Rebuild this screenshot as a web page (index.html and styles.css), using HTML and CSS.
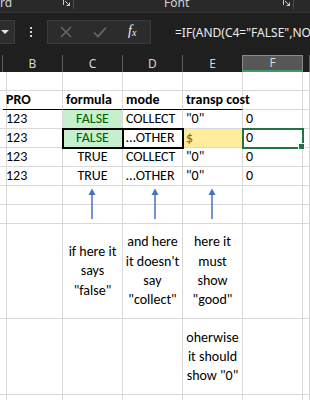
FILE: index.html
```html
<!DOCTYPE html>
<html>
<head>
  <meta charset="UTF-8">
  <link rel="stylesheet" href="styles.css">
</head>
<body>
  <!-- ribbon bottom edge -->
  <div class="ribbon">
    <span class="rb-label rb-clip">rd</span>
    <svg class="launcher" width="8" height="8" viewBox="0 0 8 8"><path d="M0.5 6V0.5H6M2 2L6.5 6.5M6.5 3.5V6.5H3.5" fill="none" stroke="#cfcfcf" stroke-width="1"/></svg>
    <span class="rb-sep"></span>
    <span class="rb-label rb-font">Font</span>
    <svg class="launcher" width="8" height="8" viewBox="0 0 8 8"><path d="M0.5 6V0.5H6M2 2L6.5 6.5M6.5 3.5V6.5H3.5" fill="none" stroke="#cfcfcf" stroke-width="1"/></svg>
    <span class="rb-sep"></span>
  </div>

  <!-- formula bar -->
  <div class="fbar">
    <div class="namebox"><span class="caret"></span></div>
    <div class="grip"><i></i><i></i><i></i></div>
    <div class="fbtns">
      <svg width="12" height="12" viewBox="0 0 12 12"><path d="M1 1L11 11M11 1L1 11" stroke="#6b6b6b" stroke-width="1.4"/></svg>
      <svg width="14" height="12" viewBox="0 0 14 12"><path d="M1 6.5L5 10.5L13 1.5" fill="none" stroke="#6b6b6b" stroke-width="1.6"/></svg>
      <span class="fx">f<sub>x</sub></span>
    </div>
    <div class="finput">=IF(AND(C4="FALSE",NOT(D4="COLLECT")),"good","0")</div>
  </div>

  <!-- column headers -->
  <div class="colheads">
    <div class="ch"></div>
    <div class="ch">B</div>
    <div class="ch">C</div>
    <div class="ch">D</div>
    <div class="ch">E</div>
    <div class="ch ch-sel">F</div>
    <div class="ch"></div>
  </div>

  <!-- cells -->
  <div class="sheet">
    <!-- row 1 -->
    <div class="c"></div><div class="c"></div><div class="c"></div><div class="c"></div><div class="c"></div><div class="c"></div><div class="c"></div>
    <!-- row 2 -->
    <div class="c"></div>
    <div class="c b hd">PRO</div>
    <div class="c b hd">formula</div>
    <div class="c b hd">mode</div>
    <div class="c b hd over">transp cost</div>
    <div class="c"></div><div class="c"></div>
    <!-- row 3 -->
    <div class="c"></div>
    <div class="c">123</div>
    <div class="c ctr good">FALSE</div>
    <div class="c">COLLECT</div>
    <div class="c">"0"</div>
    <div class="c">0</div>
    <div class="c"></div>
    <!-- row 4 -->
    <div class="c"></div>
    <div class="c">123</div>
    <div class="c ctr good boxed">FALSE</div>
    <div class="c boxed">…OTHER</div>
    <div class="c neutral">$</div>
    <div class="c active">0<span class="handle"></span></div>
    <div class="c"></div>
    <!-- row 5 -->
    <div class="c"></div>
    <div class="c">123</div>
    <div class="c ctr">TRUE</div>
    <div class="c">COLLECT</div>
    <div class="c">"0"</div>
    <div class="c">0</div>
    <div class="c"></div>
    <!-- row 6 -->
    <div class="c"></div>
    <div class="c">123</div>
    <div class="c ctr">TRUE</div>
    <div class="c">…OTHER</div>
    <div class="c">"0"</div>
    <div class="c">0</div>
    <div class="c"></div>
    <!-- row 7: arrows -->
    <div class="c"></div>
    <div class="c"></div>
    <div class="c arrow-cell"><svg class="arrow" width="10" height="32" viewBox="0 0 10 32"><path d="M5 6V31" stroke="#4472c4" stroke-width="1.5"/><path d="M1.5 7L5 0.5L8.5 7Z" fill="#4472c4"/></svg></div>
    <div class="c arrow-cell"><svg class="arrow arrow-d" width="10" height="32" viewBox="0 0 10 32"><path d="M5 6V31" stroke="#4472c4" stroke-width="1.5"/><path d="M1.5 7L5 0.5L8.5 7Z" fill="#4472c4"/></svg></div>
    <div class="c arrow-cell"><svg class="arrow arrow-e" width="10" height="32" viewBox="0 0 10 32"><path d="M5 6V31" stroke="#4472c4" stroke-width="1.5"/><path d="M1.5 7L5 0.5L8.5 7Z" fill="#4472c4"/></svg></div>
    <div class="c"></div><div class="c"></div>
    <!-- row 8 -->
    <div class="c"></div><div class="c"></div><div class="c"></div><div class="c"></div><div class="c"></div><div class="c"></div><div class="c"></div>
    <!-- row 9 -->
    <div class="c"></div>
    <div class="c"></div>
    <div class="c wrap">if here it says "false"</div>
    <div class="c wrap">and here it doesn't say "collect"</div>
    <div class="c wrap">here it must show "good"</div>
    <div class="c"></div><div class="c"></div>
    <!-- row 10 -->
    <div class="c"></div>
    <div class="c"></div>
    <div class="c"></div>
    <div class="c"></div>
    <div class="c wrap">oherwise it should show "0"</div>
    <div class="c"></div><div class="c"></div>
    <!-- row 11 -->
    <div class="c"></div><div class="c"></div><div class="c"></div><div class="c"></div><div class="c"></div><div class="c"></div><div class="c"></div>
  </div>
</body>
</html>
```

FILE: styles.css
```css
html, body {
  margin: 0;
  padding: 0;
  width: 310px;
  height: 400px;
  overflow: hidden;
  background-color: #ffffff;
}
body {
  font-family: Carlito, Calibri, "Liberation Sans", sans-serif;
}
/* ribbon */
.ribbon {
  display: flex;
  align-items: flex-start;
  height: 12px;
  background-color: #292929;
  color: #d4d4d4;
  font-family: "Noto Sans", "Open Sans", sans-serif;
  font-size: 12px;
  overflow: hidden;
}
.rb-label {
  line-height: 12px;
  margin-top: -3px;
}
.rb-clip {
  width: 63px;
}
.rb-font {
  margin-left: 90px;
  width: 119px;
}
.launcher {
  margin-top: -1px;
}
.rb-sep {
  width: 1px;
  height: 9px;
  margin-left: 2px;
  background-color: #4a4a4a;
}
/* formula bar */
.fbar {
  display: flex;
  align-items: center;
  height: 43px;
  padding-bottom: 4px;
  box-sizing: border-box;
  background-color: #1f1f1f;
  border-top: 1px solid #333333;
}
.namebox {
  width: 15px;
  height: 24px;
  background-color: #2e2e2e;
  border: 1px solid #3d3d3d;
  border-left: none;
  box-sizing: border-box;
  display: flex;
  align-items: center;
  justify-content: center;
}
.caret {
  width: 0;
  height: 0;
  margin-left: -4px;
  border-left: 4px solid transparent;
  border-right: 4px solid transparent;
  border-top: 4px solid #e6e6e6;
}
.grip {
  width: 32px;
  display: flex;
  flex-direction: column;
  align-items: center;
  gap: 2px;
}
.grip i {
  width: 2px;
  height: 2px;
  background-color: #d0d0d0;
}
.fbtns {
  width: 104px;
  height: 24px;
  box-sizing: border-box;
  background-color: #2c2c2c;
  border: 1px solid #3a3a3a;
  display: flex;
  align-items: center;
  gap: 21px;
  padding-left: 12px;
}
.fx {
  color: #f0f0f0;
  font-family: "Liberation Serif", serif;
  font-style: italic;
  font-size: 14px;
  line-height: 14px;
}
.fx sub {
  font-size: 10px;
  vertical-align: -1px;
}
.finput {
  flex: 1;
  margin-left: 24px;
  color: #ececec;
  font-family: "Noto Sans", "Open Sans", sans-serif;
  font-size: 12px;
  white-space: nowrap;
  overflow: hidden;
}
/* column headers */
.colheads {
  display: grid;
  grid-template-columns: 3px repeat(5, 60px) 1fr;
  height: 17px;
  background-color: #1f1f1f;
}
.ch {
  border-right: 1px solid #5e5e5e;
  color: #d6d6d6;
  font-family: "Noto Sans", "Open Sans", sans-serif;
  font-size: 12px;
  line-height: 17px;
  text-align: center;
}
.ch-sel {
  background-color: #575757;
  border: 1px solid #8a8a8a;
  border-bottom: 2px solid #3f9a63;
  line-height: 14px;
  margin-left: -1px;
}
/* sheet */
.sheet {
  display: grid;
  grid-template-columns: 3px repeat(5, 60px) 1fr;
  grid-template-rows: repeat(8, 19px) 95px 76px 19px;
  font-size: 14px;
  color: #000000;
}
.c {
  position: relative;
  box-sizing: border-box;
  border-right: 1px solid #d9d9d9;
  border-bottom: 1px solid #d9d9d9;
  padding: 0 3px;
  line-height: 18px;
  white-space: nowrap;
}
.b {
  font-weight: bold;
}
.hd {
  border-bottom-color: #000000;
}
.over {
  overflow: visible;
  z-index: 1;
}
.ctr {
  text-align: center;
}
.good {
  background-color: #c6efce;
  color: #006100;
}
.neutral {
  background-color: #ffeb9c;
  color: #9c5700;
}
.boxed {
  outline: 2px solid #000000;
  outline-offset: -1px;
  z-index: 2;
}
.active {
  outline: 2px solid #217346;
  outline-offset: -1px;
  z-index: 2;
}
.handle {
  position: absolute;
  right: -3px;
  bottom: -3px;
  width: 5px;
  height: 5px;
  background-color: #217346;
  border: 1px solid #ffffff;
}
.arrow-cell {
  z-index: 1;
}
.arrow {
  position: absolute;
  left: 24px;
  top: 2px;
}
.arrow-d {
  left: 27px;
}
.wrap {
  white-space: normal;
  display: flex;
  align-items: center;
  justify-content: center;
  text-align: center;
  line-height: 19.3px;
  padding: 0 2px;
}
```
